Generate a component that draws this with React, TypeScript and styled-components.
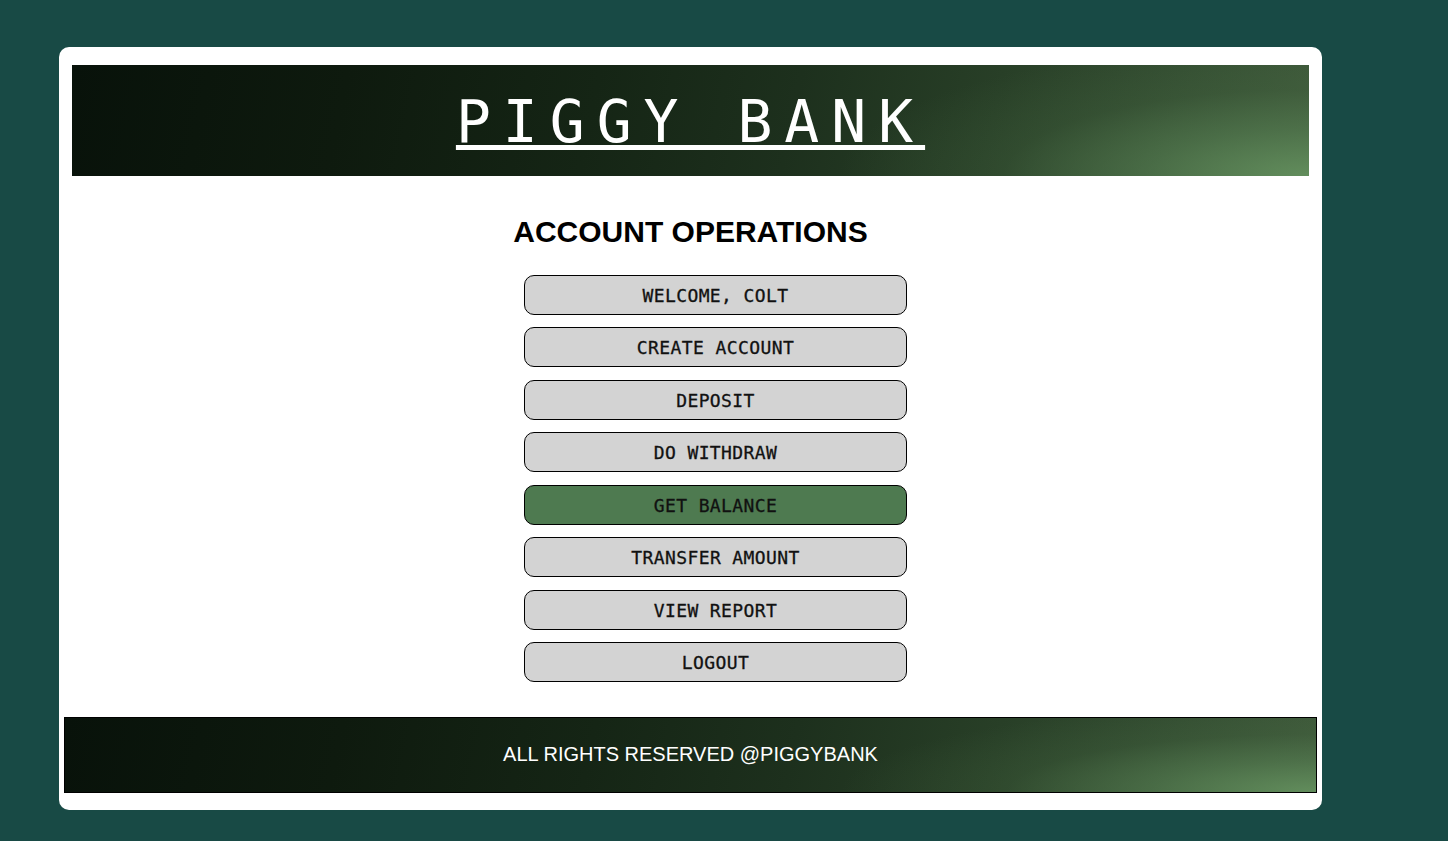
import React from "react";
import styled, { createGlobalStyle } from "styled-components";

const GlobalStyle = createGlobalStyle`
  html, body {
    margin: 0;
    padding: 0;
    background: #184a45;
    font-family: "Liberation Sans", Arial, sans-serif;
  }
  * { box-sizing: border-box; }
`;

const Page = styled.div`
  width: 1448px;
  height: 841px;
  padding: 47px 0 0 59px;
  background: #184a45;
`;

const Card = styled.div`
  width: 1263px;
  height: 763px;
  background: #ffffff;
  border-radius: 10px;
  padding: 18px 5px 17px;
  display: flex;
  flex-direction: column;
  align-items: stretch;
`;

const bannerGradient = `
  radial-gradient(ellipse 38% 120% at 100% 100%,
    rgba(104, 150, 98, 0.85) 0%,
    rgba(90, 132, 86, 0.55) 35%,
    rgba(70, 105, 66, 0.25) 65%,
    rgba(60, 90, 58, 0) 100%),
  linear-gradient(102deg, #08120a 0%, #0e1a0e 22%, #152515 42%, #1d301d 58%, #283f27 74%, #344e32 88%, #3f5a3b 100%)
`;

const Header = styled.header`
  margin: 0 8px;
  height: 111px;
  display: flex;
  align-items: center;
  justify-content: center;
  background: ${bannerGradient};
`;

const Title = styled.h1`
  margin: 2px 0 0 0;
  font-family: "DejaVu Sans Mono", monospace;
  font-weight: normal;
  font-size: 58px;
  letter-spacing: 12px;
  line-height: 1;
  color: #ffffff;
  text-decoration: underline;
  text-decoration-thickness: 5px;
  text-underline-offset: 3px;
  white-space: pre;
`;

const Main = styled.main`
  flex: 1;
  display: flex;
  flex-direction: column;
  align-items: center;
  padding-top: 39px;
`;

const Heading = styled.h2`
  margin: 0 0 26px 0;
  font-family: "Liberation Sans", Arial, sans-serif;
  font-weight: bold;
  font-size: 30px;
  color: #000;
`;

const ButtonList = styled.div`
  display: flex;
  flex-direction: column;
  gap: 12.43px;
  margin-left: 50px;
`;

const OpButton = styled.button<{ $active?: boolean }>`
  width: 383px;
  height: 40px;
  border: 1px solid #000;
  border-radius: 10px;
  background: ${(p) => (p.$active ? "#4e7a50" : "#d3d3d3")};
  color: #111;
  font-family: "DejaVu Sans Mono", monospace;
  font-size: 18px;
  letter-spacing: 0.4px;
  -webkit-text-stroke: 0.3px #111;
  padding: 1px 0 0 0;
  cursor: pointer;
`;

const Footer = styled.footer`
  height: 76px;
  border: 1px solid #000;
  display: flex;
  align-items: center;
  justify-content: center;
  padding-bottom: 2px;
  color: #fff;
  font-family: "Liberation Sans", Arial, sans-serif;
  font-size: 20px;
  background: ${bannerGradient};
`;

const ops = [
  "WELCOME, COLT",
  "CREATE ACCOUNT",
  "DEPOSIT",
  "DO WITHDRAW",
  "GET BALANCE",
  "TRANSFER AMOUNT",
  "VIEW REPORT",
  "LOGOUT",
];

export default function App() {
  return (
    <>
      <GlobalStyle />
      <Page>
        <Card>
          <Header>
            <Title>PIGGY BANK</Title>
          </Header>
          <Main>
            <Heading>ACCOUNT OPERATIONS</Heading>
            <ButtonList>
              {ops.map((op) => (
                <OpButton key={op} $active={op === "GET BALANCE"}>
                  {op}
                </OpButton>
              ))}
            </ButtonList>
          </Main>
          <Footer>ALL RIGHTS RESERVED @PIGGYBANK</Footer>
        </Card>
      </Page>
    </>
  );
}
